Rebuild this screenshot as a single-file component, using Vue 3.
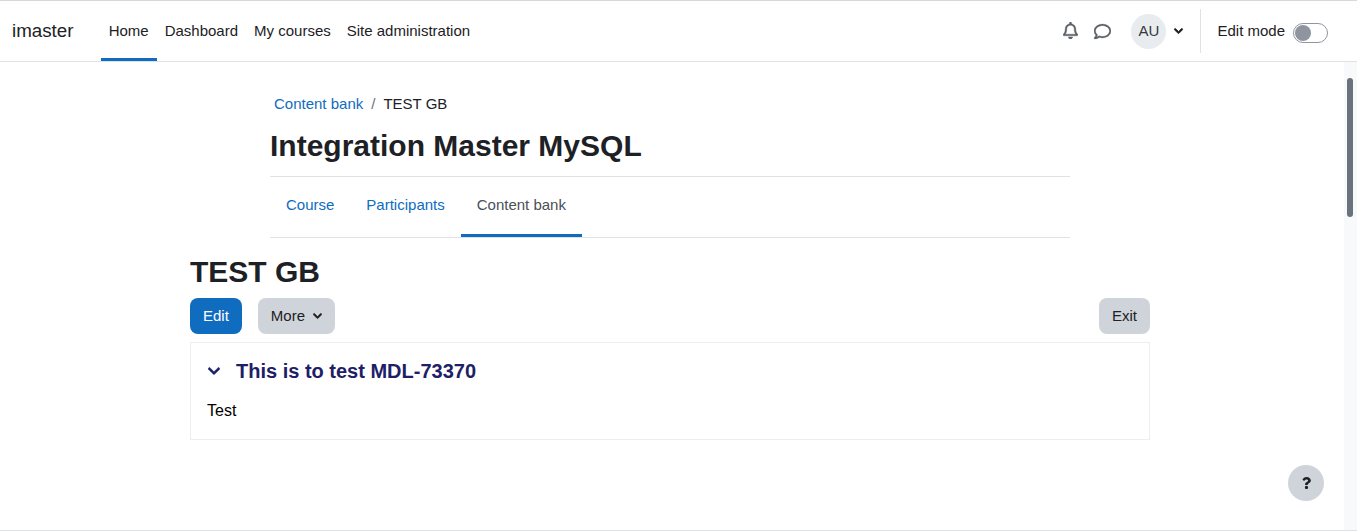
<script setup>
const navItems = [
  { label: 'Home', active: true },
  { label: 'Dashboard' },
  { label: 'My courses' },
  { label: 'Site administration' }
]
const tabs = [
  { label: 'Course' },
  { label: 'Participants' },
  { label: 'Content bank', active: true }
]
const chevron = 'M207.029 381.476L12.686 187.132c-9.373-9.373-9.373-24.569 0-33.941l22.667-22.667c9.357-9.357 24.522-9.375 33.901-.04L224 284.505l154.745-154.021c9.379-9.335 24.544-9.317 33.901.04l22.667 22.667c9.373 9.373 9.373 24.569 0 33.941L240.971 381.476c-9.373 9.372-24.569 9.372-33.942 0z'
</script>

<template>
  <div class="app">
    <nav class="navbar">
      <a class="brand">imaster</a>
      <ul class="primary">
        <li v-for="item in navItems" :key="item.label" :class="['primary-item', { active: item.active }]">{{ item.label }}</li>
      </ul>
      <div class="nav-right">
        <svg class="icon-bell" viewBox="0 0 448 512" aria-hidden="true"><path fill="currentColor" stroke="currentColor" stroke-width="12" d="M439.39 362.29c-19.32-20.76-55.47-51.99-55.47-154.29 0-77.7-54.48-139.9-127.94-155.16V32c0-17.67-14.32-32-31.98-32s-31.98 14.33-31.98 32v20.84C118.56 68.1 64.08 130.3 64.08 208c0 102.3-36.15 133.53-55.47 154.29-6 6.45-8.66 14.16-8.61 21.71.11 16.4 12.98 32 32.1 32h383.8c19.12 0 32-15.6 32.1-32 .05-7.55-2.61-15.27-8.61-21.71zM67.53 368c21.22-27.97 44.42-74.33 44.53-159.42 0-.2-.06-.38-.06-.58 0-61.86 50.14-112 112-112s112 50.14 112 112c0 .2-.06.38-.06.58.11 85.1 23.31 131.46 44.53 159.42H67.53zM224 512c35.32 0 63.97-28.65 63.97-64H160.03c0 35.35 28.65 64 63.97 64z"/></svg>
        <svg class="icon-comment" viewBox="0 0 512 512" aria-hidden="true"><path fill="currentColor" stroke="currentColor" stroke-width="8" d="M256 32C114.6 32 0 125.1 0 240c0 47.6 19.9 91.2 52.9 126.3C38 405.7 7 439.1 6.5 439.5c-6.6 7-8.4 17.2-4.6 26S14.4 480 24 480c61.5 0 110-25.7 139.1-46.3C192 442.8 223.2 448 256 448c141.4 0 256-93.1 256-208S397.4 32 256 32zm0 368c-26.7 0-53.1-4.1-78.4-12.1l-22.7-7.2-19.5 13.8c-14.3 10.1-33.9 21.4-57.5 29 7.3-12.1 14.4-25.7 19.9-40.2l10.6-28.1-20.6-21.8C69.7 314.1 48 282.2 48 240c0-88.2 93.3-160 208-160s208 71.8 208 160-93.3 160-208 160z"/></svg>
        <span class="avatar">AU</span>
        <svg class="icon-caret" viewBox="0 0 448 512" aria-hidden="true"><path fill="currentColor" stroke="currentColor" stroke-width="40" :d="chevron"/></svg>
        <span class="divider"></span>
        <span class="edit-label">Edit mode</span>
        <span class="toggle"><span class="knob"></span></span>
      </div>
    </nav>

    <div class="page">
      <header class="course-header">
        <div class="breadcrumb">
          <a class="link">Content bank</a>
          <span class="sep">/</span>
          <span class="crumb">TEST GB</span>
        </div>
        <h1 class="course-title">Integration Master MySQL</h1>
        <ul class="tabs">
          <li v-for="tab in tabs" :key="tab.label" :class="['tab', { active: tab.active }]">{{ tab.label }}</li>
        </ul>
      </header>

      <main class="content">
        <h2 class="content-title">TEST GB</h2>
        <div class="toolbar">
          <button class="btn primary-btn">Edit</button>
          <button class="btn more-btn">More
            <svg class="icon-more" viewBox="0 0 448 512" aria-hidden="true"><path fill="currentColor" stroke="currentColor" stroke-width="30" :d="chevron"/></svg>
          </button>
          <button class="btn exit-btn">Exit</button>
        </div>
        <section class="card">
          <div class="card-head">
            <svg class="icon-collapse" viewBox="0 0 448 512" aria-hidden="true"><path fill="currentColor" stroke="currentColor" stroke-width="20" :d="chevron"/></svg>
            <h3 class="card-title">This is to test MDL-73370</h3>
          </div>
          <p class="card-text">Test</p>
        </section>
      </main>
    </div>

    <div class="scroll-track"><span class="scroll-thumb"></span></div>

    <button class="help" aria-label="Help">
      <svg class="icon-help" viewBox="0 0 384 512" aria-hidden="true"><path fill="currentColor" d="M202.021 0C122.202 0 70.503 32.703 29.914 91.026c-7.363 10.58-5.093 25.086 5.178 32.874l43.138 32.709c10.373 7.865 25.132 6.026 33.253-4.148 25.049-31.381 43.63-49.449 82.757-49.449 30.764 0 68.816 19.799 68.816 49.631 0 22.552-18.617 34.134-48.993 51.164-35.423 19.86-82.299 44.576-82.299 106.405V320c0 13.255 10.745 24 24 24h72.471c13.255 0 24-10.745 24-24v-5.773c0-42.86 125.268-44.645 125.268-160.627C377.504 66.256 286.902 0 202.021 0zM192 373.459c-38.196 0-69.271 31.075-69.271 69.271 0 38.195 31.075 69.27 69.271 69.27s69.271-31.075 69.271-69.271-31.075-69.27-69.271-69.27z"/></svg>
    </button>
  </div>
</template>

<style>
html, body { margin: 0; padding: 0; background: #fff; overflow: hidden; }
</style>

<style scoped>
.app {
  position: relative;
  height: 531px;
  box-sizing: border-box;
  overflow: hidden;
  border-bottom: 1px solid #dee2e6;
  font-family: "Liberation Sans", Arial, sans-serif;
  font-size: 15px;
  color: #1d2125;
  background: #fff;
}
.navbar {
  display: flex;
  align-items: stretch;
  height: 62px;
  box-sizing: border-box;
  border-top: 1px solid #d8d8d8;
  border-bottom: 1px solid #dee2e6;
  padding: 0 29px 0 12px;
}
.brand { font-size: 18.75px; align-self: center; margin-right: 27.2px; margin-top: -1px; }
.primary { display: flex; list-style: none; margin: 0; padding: 0; }
.primary-item {
  display: flex;
  align-items: center;
  padding: 1px 8px 0;
  border-bottom: 3px solid transparent;
  box-sizing: border-box;
}
.primary-item.active { border-bottom-color: #0f6cbf; }
.nav-right { display: flex; align-items: center; margin-left: auto; color: #1d2125; }
.icon-bell { width: 15px; height: 17px; color: #5b6167; margin-right: 16px; margin-top: -1px; }
.icon-comment { width: 17px; height: 17px; color: #5b6167; margin-right: 20px; margin-top: 1px; }
.avatar {
  width: 35px;
  height: 35px;
  box-sizing: border-box;
  padding-bottom: 2px;
  border-radius: 50%;
  background: #e9ecef;
  display: flex;
  align-items: center;
  justify-content: center;
  margin-right: 8px;
  font-size: 15px;
  color: #343a40;
  margin-top: 1px;
}
.icon-caret { width: 9px; height: 10px; margin-right: 17px; color: #1d2125; }
.divider { width: 1px; height: 44px; background: #dee2e6; margin-right: 16px; margin-top: -1px; }
.edit-label { margin-right: 8px; margin-top: -1px; }
.toggle {
  width: 35px;
  height: 20px;
  box-sizing: border-box;
  border: 1px solid #8f959e;
  border-radius: 10px;
  background: #fff;
  display: flex;
  align-items: center;
  margin-top: 3px;
  padding-left: 1px;
}
.knob { width: 16px; height: 16px; border-radius: 50%; background: #8f959e; }
.page {
  width: 1340px;
  margin: 0 auto 0 0;
  display: flex;
  flex-direction: column;
  align-items: center;
}
.course-header { width: 800px; padding-top: 31px; }
.breadcrumb { display: flex; align-items: center; padding-left: 4px; height: 20px; }
.link { color: #0f6cbf; }
.sep { color: #6a737b; margin: 0 8px; }
.crumb { color: #1d2125; }
.course-title {
  font-size: 30px;
  line-height: 36px;
  font-weight: 700;
  margin: 15px 0 0;
  padding-bottom: 12px;
  border-bottom: 1px solid #dee2e6;
}
.tabs {
  display: flex;
  list-style: none;
  margin: 0;
  padding: 0;
  height: 61px;
  box-sizing: border-box;
  border-bottom: 1px solid #dee2e6;
}
.tab {
  display: flex;
  align-items: center;
  padding: 0 16px 3px;
  color: #0f6cbf;
  border-bottom: 3px solid transparent;
  box-sizing: border-box;
  height: 60px;
}
.tab.active { color: #495057; border-bottom-color: #0f6cbf; }
.content { width: 960px; }
.content-title { font-size: 30px; line-height: 34px; font-weight: 700; margin: 17px 0 9px; }
.toolbar { display: flex; gap: 16px; }
.btn {
  height: 36px;
  border: 0;
  border-radius: 8px;
  font: inherit;
  padding: 0 13px 2px;
  background: #ced4da;
  color: #1d2125;
  display: flex;
  align-items: center;
}
.primary-btn { background: #0f6cbf; color: #fff; }
.icon-more { width: 9px; height: 10px; margin-left: 8px; margin-top: 1px; }
.exit-btn { margin-left: auto; }
.card {
  margin-top: 8px;
  height: 98px;
  box-sizing: border-box;
  border: 1px solid #eeeeee;
  padding: 16px;
}
.card-head { display: flex; align-items: center; height: 24px; }
.icon-collapse { width: 12px; height: 14px; color: #1d2066; margin: 0 16px 0 1px; }
.card-title { margin: 0; font-size: 20px; font-weight: 700; color: #1d2066; }
.card-text { margin: 16px 0 0; font-size: 16px; line-height: 24px; color: #000; }
.scroll-track {
  position: absolute;
  top: 62px;
  right: 0;
  bottom: 0;
  width: 13px;
  background: #f8f9fa;
}
.scroll-thumb {
  position: absolute;
  top: 16px;
  left: 3px;
  width: 6px;
  height: 139px;
  border-radius: 3px;
  background: #6a737b;
}
.help {
  position: absolute;
  left: 1288px;
  top: 465px;
  width: 36px;
  height: 36px;
  border: 0;
  padding: 0;
  border-radius: 50%;
  background: #ced4da;
  color: #1d2125;
  display: flex;
  align-items: center;
  justify-content: center;
}
.icon-help { width: 9px; height: 12px; }
</style>
